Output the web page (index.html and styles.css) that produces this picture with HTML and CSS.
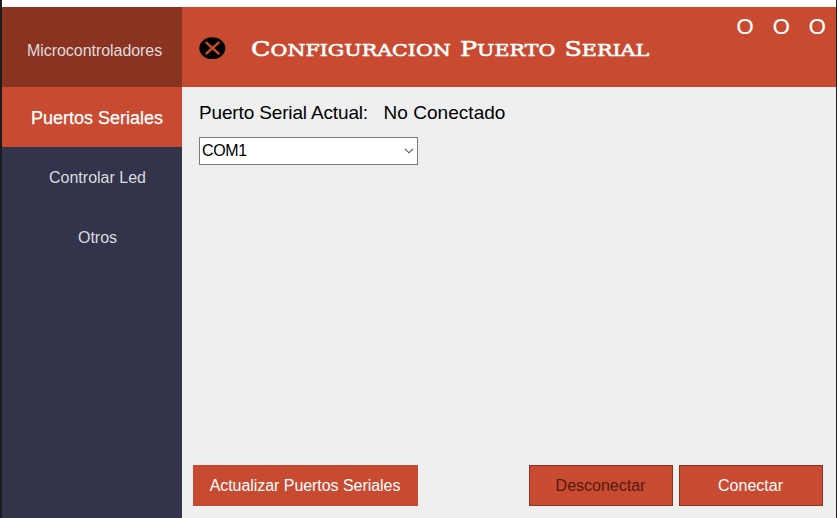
FILE: index.html
```html
<!DOCTYPE html>
<html lang="es">
<head>
<meta charset="utf-8">
<title>Configuracion Puerto Serial</title>
<link rel="stylesheet" href="styles.css">
</head>
<body>
<div class="window">
  <nav class="sidebar">
    <div class="brand">Microcontroladores</div>
    <div class="item active">Puertos Seriales</div>
    <div class="item">Controlar Led</div>
    <div class="item">Otros</div>
  </nav>
  <main class="main">
    <header class="header">
      <svg class="close" width="27" height="23" viewBox="0 0 27 23"><ellipse cx="13.3" cy="11.2" rx="13" ry="10.9" fill="#000"/><path d="M6.8 5.2 20.2 17M20.2 5.2 6.8 17" stroke="#c84a31" stroke-width="2.4" fill="none"/></svg>
      <h1 class="title"><span>Configuracion</span> <span>Puerto</span> <span>Serial</span></h1>
      <div class="controls"><span>O</span><span>O</span><span>O</span></div>
    </header>
    <section class="content">
      <div class="status"><span class="label">Puerto Serial Actual:</span><span class="value">No Conectado</span></div>
      <div class="select"><span>COM1</span><svg width="10" height="6" viewBox="0 0 10 6"><path d="M1 .8 5 4.8 9 .8" fill="none" stroke="#555" stroke-width="1.1"/></svg></div>
    </section>
    <footer class="actions">
      <button class="btn refresh">Actualizar Puertos Seriales</button>
      <button class="btn framed disconnect">Desconectar</button>
      <button class="btn framed">Conectar</button>
    </footer>
  </main>
</div>
</body>
</html>
```
FILE: styles.css
```css
* { box-sizing: border-box; }
body { margin: 0; height: 518px; overflow: hidden; background: #fff; font-family: "Liberation Sans", Arial, sans-serif; font-size: 16px; }
.window { display: flex; height: 518px; border-left: 2px solid #1c1c1e; border-right: 1px solid #1c1c1e; }
.sidebar { width: 180px; margin-top: 7px; background: #33334c; color: #dcdcdc; flex: none; }
.brand { height: 80px; line-height: 87px; padding-left: 25px; background: #8b3321; white-space: nowrap; letter-spacing: -.05px; }
.item { height: 60px; line-height: 61px; text-align: center; padding-left: 11px; white-space: nowrap; }
.active { padding-left: 10px; background: #c84a31; color: #fff; font-size: 18px; line-height: 62px; -webkit-text-stroke: .25px #fff; }
.main { flex: 1; margin-top: 7px; background: #efefef; display: flex; flex-direction: column; }
.header { height: 80px; background: #c84a31; color: #fff; display: flex; }
.close { margin: 30px 0 0 17px; flex: none; }
.title { margin: 30px 0 0 25px; width: 400px; display: flex; gap: 7.5px; font: 400 17px/24px "DejaVu Serif", serif; text-transform: uppercase; white-space: nowrap; -webkit-text-stroke: .6px #fff; transform: scaleX(1.212); transform-origin: 0 0; }
.title span { display: block; }
.title span::first-letter { font-size: 21px; }
.controls { display: flex; gap: 19px; margin: 6px 0 0 85.5px; font-size: 22px; line-height: 28px; -webkit-text-stroke: .2px #fff; }
.content { flex: 1; padding: 14px 17px; }
.status { display: flex; gap: 15.5px; font-size: 19px; line-height: 24px; white-space: nowrap; letter-spacing: -.15px; }
.value { letter-spacing: .04px; }
.select { display: flex; justify-content: space-between; align-items: center; width: 219px; height: 28px; margin-top: 12px; padding: 0 3px 0 2px; border: 1px solid #7a7a7a; background: #fff; }
.select span { letter-spacing: -.4px; }
.actions { display: flex; gap: 6px; padding: 0 13px 12px 11px; }
.btn { width: 144px; height: 41px; padding: 0 1px 0 0; border: 0; background: #c84a31; color: #fff; font: 16px "Liberation Sans", Arial, sans-serif; white-space: nowrap; }
.refresh { width: 225px; margin-right: auto; letter-spacing: -.05px; }
.framed { border: 1px solid #8b3321; }
.disconnect { color: #551b10; }
```
